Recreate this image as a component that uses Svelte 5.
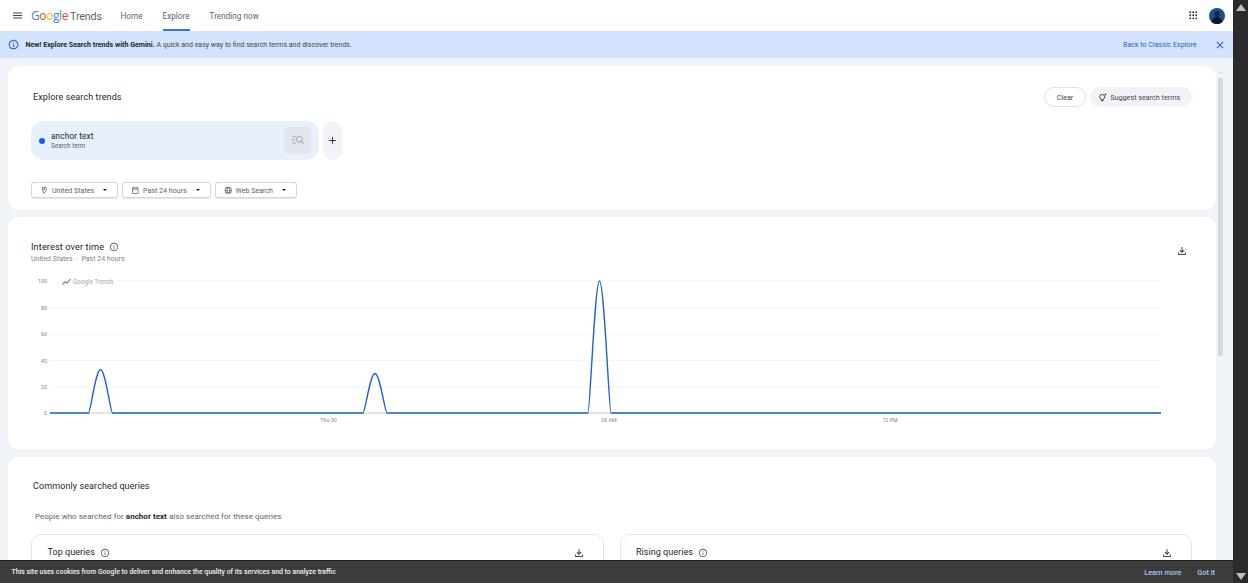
<script>
  const yTicks = [
    { label: '100', y: 281 },
    { label: '80', y: 307.5 },
    { label: '60', y: 334 },
    { label: '40', y: 360.5 },
    { label: '20', y: 387 }
  ];
  const xTicks = [
    { label: 'Thu 30', x: 328.5 },
    { label: '06 AM', x: 609 },
    { label: '12 PM', x: 890 }
  ];
  const base = 413;
  const peaks = [
    { c: 100.5, w: 12, top: 369.5 },
    { c: 375, w: 12, top: 373.5 },
    { c: 599.5, w: 11.5, top: 281 }
  ];
  function peak(p) {
    const s = p.c - p.w, e = p.c + p.w, a = p.w * 0.17, d = p.w * 0.41;
    return `L${s} ${base} C${s + a} ${base} ${p.c - d} ${p.top} ${p.c} ${p.top} C${p.c + d} ${p.top} ${e - a} ${base} ${e} ${base} `;
  }
  const line = `M50 ${base} ` + peaks.map(peak).join('') + `L1161 ${base}`;
</script>

<div class="screen">
  <div class="page">
    <header class="topbar">
      <svg class="menu" viewBox="0 0 24 24" aria-hidden="true"><path d="M3 18h18v-2H3v2zm0-5h18v-2H3v2zm0-7v2h18V6H3z" /></svg>
      <div class="logo">
        <span class="g-blue">G</span><span class="g-red">o</span><span class="g-yellow">o</span><span class="g-blue">g</span><span class="g-green">l</span><span class="g-red">e</span>
        <span class="logo-word">Trends</span>
      </div>
      <nav class="nav">
        <span class="nav-item">Home</span>
        <span class="nav-item active">Explore</span>
        <span class="nav-item">Trending now</span>
      </nav>
      <svg class="apps" viewBox="0 0 12 12" aria-hidden="true">
        {#each [1.7, 6, 10.3] as cy}
          {#each [1.7, 6, 10.3] as cx}
            <circle {cx} {cy} r="1.25" />
          {/each}
        {/each}
      </svg>
      <svg class="avatar" viewBox="0 0 16 16" aria-hidden="true">
        <circle cx="8" cy="8" r="8" fill="#1d4f8c" />
        <ellipse cx="8" cy="6" rx="2.6" ry="3" fill="#16263f" />
        <path d="M2.6 14c.6-3.6 2.8-5 5.4-5s4.8 1.4 5.4 5a8 8 0 0 1-10.8 0z" fill="#0c1626" />
      </svg>
    </header>

    <div class="banner">
      <svg class="banner-info" viewBox="0 0 24 24" aria-hidden="true"><path d="M11 7h2v2h-2zm0 4h2v6h-2zm1-9C6.48 2 2 6.48 2 12s4.48 10 10 10 10-4.48 10-10S17.52 2 12 2zm0 18c-4.41 0-8-3.59-8-8s3.59-8 8-8 8 3.59 8 8-3.59 8-8 8z" /></svg>
      <p class="banner-text"><b>New! Explore Search trends with Gemini.</b> A quick and easy way to find search terms and discover trends.</p>
      <span class="banner-link">Back to Classic Explore</span>
      <svg class="banner-close" viewBox="0 0 24 24" aria-hidden="true"><path d="M19 6.41 17.59 5 12 10.59 6.41 5 5 6.41 10.59 12 5 17.59 6.41 19 12 13.41 17.59 19 19 17.59 13.41 12z" /></svg>
    </div>

    <div class="content">
      <main class="cards">
        <section class="card explore">
          <div class="explore-head">
            <h2 class="title">Explore search trends</h2>
            <button class="clear">Clear</button>
            <button class="suggest">
              <svg viewBox="0 0 24 24" aria-hidden="true"><path d="M10 6a6 6 0 0 0-3.600 10.800c.5.4.8 1 .8 1.700V19h5.600v-.5c0-.7.3-1.300.8-1.700A6 6 0 0 0 10 6zm-2.800 15h5.600" fill="none" stroke="#1f1f1f" stroke-width="2" /><path d="M18 2l.9 2.600 2.600.9-2.600.9L18 9l-.9-2.600-2.600-.9 2.600-.9z" fill="#1f1f1f" /></svg>
              Suggest search terms
            </button>
          </div>
          <div class="terms">
            <div class="term">
              <span class="dot"></span>
              <div class="term-text">
                <span class="term-name">anchor text</span>
                <span class="term-sub">Search term</span>
              </div>
              <span class="term-btn">
                <svg viewBox="0 0 24 24" aria-hidden="true"><path d="M3 6h7M3 11h5M3 16h7" stroke="#a9b0b8" stroke-width="1.800" fill="none" /><circle cx="15" cy="10" r="4.500" stroke="#a9b0b8" stroke-width="1.800" fill="none" /><path d="M18.500 13.500 22 17" stroke="#a9b0b8" stroke-width="1.800" /></svg>
              </span>
            </div>
            <div class="add">
              <svg viewBox="0 0 24 24" aria-hidden="true"><path d="M19 13h-6v6h-2v-6H5v-2h6V5h2v6h6z" /></svg>
            </div>
          </div>
          <div class="filters">
            <button class="filter f1">
              <svg viewBox="0 0 24 24" aria-hidden="true"><path d="M12 2a7 7 0 0 0-7 7c0 5 7 13 7 13s7-8 7-13a7 7 0 0 0-7-7zm0 2a5 5 0 0 1 5 5c0 2.900-3 7.300-5 9.900C10 16.300 7 11.900 7 9a5 5 0 0 1 5-5zm0 2.500a2.500 2.500 0 1 0 0 5 2.500 2.500 0 0 0 0-5z" /></svg>
              <span>United States</span><i class="caret"></i>
            </button>
            <button class="filter f2">
              <svg viewBox="0 0 24 24" aria-hidden="true"><path d="M19 4h-1V2h-2v2H8V2H6v2H5a2 2 0 0 0-2 2v14a2 2 0 0 0 2 2h14a2 2 0 0 0 2-2V6a2 2 0 0 0-2-2zm0 16H5V10h14v10zm0-12H5V6h14v2z" /></svg>
              <span>Past 24 hours</span><i class="caret"></i>
            </button>
            <button class="filter f3">
              <svg viewBox="0 0 24 24" aria-hidden="true"><path d="M12 2a10 10 0 1 0 0 20 10 10 0 0 0 0-20zm7.900 9h-3.400a15 15 0 0 0-1.300-6A8 8 0 0 1 19.900 11zM12 4c1 1.200 2.200 3.800 2.500 7h-5C9.800 7.800 11 5.200 12 4zM8.800 5a15 15 0 0 0-1.300 6H4.100A8 8 0 0 1 8.800 5zM4.100 13h3.400a15 15 0 0 0 1.300 6A8 8 0 0 1 4.100 13zM12 20c-1-1.200-2.200-3.800-2.500-7h5c-.3 3.200-1.500 5.800-2.500 7zm3.200-1a15 15 0 0 0 1.300-6h3.400a8 8 0 0 1-4.700 6z" /></svg>
              <span>Web Search</span><i class="caret"></i>
            </button>
          </div>
        </section>

        <section class="card interest">
          <div class="interest-head">
            <div>
              <div class="interest-title">
                <h2>Interest over time</h2>
                <svg class="info" viewBox="0 0 24 24" aria-hidden="true"><path d="M11 7h2v2h-2zm0 4h2v6h-2zm1-9C6.480 2 2 6.480 2 12s4.480 10 10 10 10-4.480 10-10S17.520 2 12 2zm0 18c-4.410 0-8-3.590-8-8s3.590-8 8-8 8 3.590 8 8-3.590 8-8 8z" /></svg>
              </div>
              <p class="interest-sub">United States &nbsp;·&nbsp; Past 24 hours</p>
            </div>
            <svg class="download" viewBox="0 0 24 24" aria-hidden="true"><path d="M12 16l-5-5 1.400-1.450L11 12.150V4h2v8.150l2.600-2.600L17 11zM6 20a2 2 0 0 1-2-2v-3h2v3h12v-3h2v3a2 2 0 0 1-2 2z" /></svg>
          </div>
          <svg class="chart" viewBox="8 217 1208 232" aria-label="Interest over time chart">
            {#each yTicks as t}
              <line x1="50" x2="1161" y1={t.y} y2={t.y} class="grid" />
              <text x="47" y={t.y + 2} class="axis" text-anchor="end">{t.label}</text>
            {/each}
            <line x1="50" x2="1161" y1={base} y2={base} class="baseline" />
            <text x="47" y={base + 2} class="axis" text-anchor="end">0</text>
            <rect x="50" y="275" width="68" height="12" fill="#fff" />
            <path d="M62.500 284.500l2.800-3 1.700 1.700 3.500-4" fill="none" stroke="#80868b" stroke-width="1.100" />
            <text x="73" y="284" class="watermark">Google Trends</text>
            {#each xTicks as t}
              <text x={t.x} y="421.500" class="axis" text-anchor="middle">{t.label}</text>
            {/each}
            <path d={line} fill="none" stroke="#1f62d0" stroke-width="1.400" />
          </svg>
        </section>

        <section class="card queries">
          <h2 class="title">Commonly searched queries</h2>
          <p class="queries-sub">People who searched for <b>anchor text</b> also searched for these queries</p>
          <div class="query-grid">
            <div class="query-card">
              <span class="q-title">Top queries</span>
              <svg class="info" viewBox="0 0 24 24" aria-hidden="true"><path d="M11 7h2v2h-2zm0 4h2v6h-2zm1-9C6.480 2 2 6.480 2 12s4.480 10 10 10 10-4.480 10-10S17.520 2 12 2zm0 18c-4.410 0-8-3.590-8-8s3.590-8 8-8 8 3.590 8 8-3.590 8-8 8z" /></svg>
              <svg class="download" viewBox="0 0 24 24" aria-hidden="true"><path d="M12 16l-5-5 1.400-1.450L11 12.150V4h2v8.150l2.600-2.600L17 11zM6 20a2 2 0 0 1-2-2v-3h2v3h12v-3h2v3a2 2 0 0 1-2 2z" /></svg>
            </div>
            <div class="query-card">
              <span class="q-title">Rising queries</span>
              <svg class="info" viewBox="0 0 24 24" aria-hidden="true"><path d="M11 7h2v2h-2zm0 4h2v6h-2zm1-9C6.480 2 2 6.480 2 12s4.480 10 10 10 10-4.480 10-10S17.520 2 12 2zm0 18c-4.410 0-8-3.590-8-8s3.590-8 8-8 8 3.590 8 8-3.590 8-8 8z" /></svg>
              <svg class="download" viewBox="0 0 24 24" aria-hidden="true"><path d="M12 16l-5-5 1.400-1.450L11 12.150V4h2v8.150l2.600-2.600L17 11zM6 20a2 2 0 0 1-2-2v-3h2v3h12v-3h2v3a2 2 0 0 1-2 2z" /></svg>
            </div>
          </div>
        </section>
      </main>
      <div class="inner-scroll"><i class="inner-arrow"></i><span class="inner-thumb"></span></div>
    </div>
  </div>

  <div class="outer-scroll">
    <i class="arrow up"></i>
    <i class="arrow down"></i>
  </div>

  <div class="cookie">
    <span class="cookie-text">This site uses cookies from Google to deliver and enhance the quality of its services and to analyze traffic</span>
    <span class="cookie-link">Learn more</span>
    <span class="cookie-link got">Got it</span>
  </div>
</div>

<style>
  :global(body) {
    margin: 0;
    font-family: Roboto, "Liberation Sans", sans-serif;
    color: #1f1f1f;
    overflow: hidden;
  }
  h2, p { margin: 0; font-weight: 400; }
  button { font-family: inherit; cursor: default; }

  .screen {
    position: relative;
    display: flex;
    width: 1248px;
    height: 583px;
    overflow: hidden;
  }
  .page {
    flex: 0 0 1233px;
    display: flex;
    flex-direction: column;
    background: #f0f4f9;
  }

  .topbar {
    flex: 0 0 31px;
    display: flex;
    align-items: center;
    padding-left: 12px;
    background: #fff;
  }
  .menu { width: 11px; height: 11px; fill: #444746; transform: scale(1.1); }
  .logo {
    display: flex;
    align-items: baseline;
    margin-left: 8px;
    font-family: "Open Sans", sans-serif;
    font-size: 12px;
    letter-spacing: -0.4px;
    width: 89.500px;
    white-space: pre;
  }
  .g-blue { color: #4285f4; }
  .g-red { color: #ea4335; }
  .g-yellow { color: #fbbc05; }
  .g-green { color: #34a853; }
  .logo-word {
    color: #5f6368;
    margin-left: 2px;
    font-family: Roboto, sans-serif;
    font-weight: 400;
    font-size: 10.800px;
    letter-spacing: -0.2px;
  }
  .nav { display: flex; align-self: stretch; gap: 20px; }
  .nav-item {
    display: flex;
    align-items: center;
    padding: 2px 0 0;
    font-size: 8.200px;
    color: #5f6368;
    border-bottom: 2px solid transparent;
  }
  .nav-item.active { color: #5f6368; border-bottom-color: #3f72d8; }
  .apps { width: 8.500px; height: 8.500px; margin-left: auto; fill: #1f1f1f; }
  .avatar { width: 16px; height: 16px; margin: 0 8px 0 12px; }

  .banner {
    flex: 0 0 27px;
    display: flex;
    align-items: center;
    padding-left: 8px;
    background: #d3e3fd;
  }
  .banner-info { width: 11px; height: 11px; fill: #2a5fc4; transform: scale(1.050); }
  .banner-text { margin-left: 6.500px; font-size: 7px; color: #444746; white-space: nowrap; }
  .banner-text b { font-weight: 700; font-size: 7.100px; color: #1f1f1f; }
  .banner-link { margin-left: auto; font-size: 7.100px; color: #2a5fc4; }
  .banner-close { width: 12px; height: 12px; margin: 0 7.500px 0 17px; fill: #2a5fc4; }

  .content { flex: 1; display: flex; min-height: 0; padding-top: 8px; }
  .cards {
    flex: 0 0 1208px;
    margin-left: 8px;
    display: flex;
    flex-direction: column;
    min-width: 0;
  }
  .card { background: #fff; border-radius: 11px; flex: none; }
  .title { font-size: 9px; letter-spacing: 0.1px; color: #1f1f1f; }

  .explore { height: 144px; padding: 0 24px 0 23px; box-sizing: border-box; }
  .explore-head { display: flex; align-items: center; height: 22px; margin-top: 20px; }
  .explore-head .title { margin: 0 auto 0 2px; }
  .clear {
    width: 42px;
    height: 20px;
    padding: 0;
    border: 1px solid #dde1e6;
    border-radius: 10px;
    background: #fff;
    font-size: 7.200px;
    color: #444746;
  }
  .suggest {
    display: flex;
    align-items: center;
    justify-content: center;
    gap: 2.500px;
    width: 102px;
    height: 20px;
    margin-left: 4px;
    padding: 0 4px 0 0;
    border: 0;
    border-radius: 10px;
    background: #f0f4f9;
    font-size: 7.200px;
    color: #444746;
  }
  .suggest svg { width: 10px; height: 10px; }

  .terms { display: flex; gap: 4px; margin-top: 13px; }
  .term {
    display: flex;
    align-items: center;
    width: 288px;
    height: 39px;
    box-sizing: border-box;
    padding: 0 8px 0 7px;
    background: #e8f0fe;
    border-radius: 13px;
  }
  .dot { width: 6px; height: 6px; border-radius: 50%; background: #1a5fe6; margin-left: 0.5px; }
  .term-text { display: flex; flex-direction: column; gap: 1px; margin-left: 6.500px; }
  .term-name { font-size: 8.300px; letter-spacing: 0.1px; color: #1f1f1f; }
  .term-sub { font-size: 6.400px; color: #5f6368; }
  .term-btn {
    display: flex;
    align-items: center;
    justify-content: center;
    width: 27px;
    height: 27px;
    margin-left: auto;
    border-radius: 5px;
    background: #e2e7ee;
  }
  .term-btn svg { width: 15px; height: 15px; }
  .add {
    display: flex;
    align-items: center;
    justify-content: center;
    width: 19px;
    height: 39px;
    background: #f0f4f9;
    border-radius: 10px;
  }
  .add svg { width: 11px; height: 11px; fill: #1f1f1f; }

  .filters { display: flex; gap: 4px; margin-top: 22px; }
  .filter {
    display: flex;
    align-items: center;
    height: 16px;
    box-sizing: border-box;
    padding: 0 0 0 8px;
    background: #fff;
    border: 1px solid #d5d8dc;
    border-radius: 3px;
    box-shadow: 0 0.5px 1px rgba(60, 64, 67, 0.15);
    font-size: 7.100px;
    color: #5f6368;
  }
  .filter svg { width: 8.500px; height: 8.500px; fill: #5f6368; }
  .filter span { margin-left: 3.500px; white-space: nowrap; }
  .f1 { width: 87px; }
  .f2 { width: 88.500px; }
  .f3 { width: 82px; }
  .caret {
    margin-left: auto;
    margin-right: 10px;
    width: 0;
    height: 0;
    border-left: 2.500px solid transparent;
    border-right: 2.500px solid transparent;
    border-top: 2.500px solid #1f1f1f;
  }

  .interest { position: relative; height: 232px; margin-top: 7px; }
  .interest-head {
    display: flex;
    justify-content: space-between;
    padding: 24px 28px 0 23px;
    position: relative;
    z-index: 1;
  }
  .interest-title { display: flex; align-items: center; gap: 5px; }
  .interest-title h2 { font-size: 9.200px; letter-spacing: 0.1px; }
  .info { width: 10px; height: 10px; fill: #5f6368; }
  .interest-sub { margin-top: 3px; font-size: 7px; color: #80868b; }
  .download { width: 12px; height: 12px; fill: #444746; margin-top: 4px; }
  .chart { position: absolute; inset: 0; width: 1208px; height: 232px; }
  .grid { stroke: #eef0f2; stroke-width: 0.8; }
  .baseline { stroke: #c8cacc; stroke-width: 1; }
  .axis { font-size: 5.300px; fill: #80868b; font-family: Roboto, sans-serif; }
  .watermark { font-size: 6.300px; fill: #a6a9ad; font-family: Roboto, sans-serif; }

  .queries { height: 140px; margin-top: 8px; padding: 24px 24px 0 23px; box-sizing: border-box; }
  .queries .title { margin-left: 2px; }
  .queries-sub { margin: 21px 0 0 4px; font-size: 7.900px; letter-spacing: 0.08px; color: #5f6368; }
  .queries-sub b { color: #1f1f1f; font-weight: 700; }
  .query-grid { display: grid; grid-template-columns: 1fr 1fr; gap: 16px; margin-top: 13px; }
  .query-card {
    display: flex;
    gap: 5px;
    height: 60px;
    padding: 12px 18px 0 15.500px;
    border: 1px solid #e3e5e8;
    border-radius: 10px;
    box-sizing: border-box;
    align-items: flex-start;
  }
  .q-title { font-size: 9.100px; color: #1f1f1f; }
  .query-card .info { margin-top: 1px; }
  .query-card .download { margin: 0 0 0 auto; }

  .inner-scroll { position: relative; flex: 1; }
  .inner-arrow {
    position: absolute;
    left: 3px;
    top: 5px;
    border-left: 2px solid transparent;
    border-right: 2px solid transparent;
    border-bottom: 2.500px solid #d2d5d8;
  }
  .inner-thumb {
    position: absolute;
    left: 2px;
    top: 12px;
    width: 5px;
    height: 278px;
    background: #d6d9dc;
    border-radius: 1px;
  }

  .outer-scroll {
    position: relative;
    flex: 1;
    background: #2b2b2b;
  }
  .arrow {
    position: absolute;
    left: 3px;
    width: 0;
    height: 0;
    border-left: 5px solid transparent;
    border-right: 5px solid transparent;
  }
  .arrow.up { top: 4px; border-bottom: 7px solid #bdbdbd; }
  .arrow.down { bottom: 3px; border-top: 7px solid #bdbdbd; }

  .cookie {
    position: absolute;
    left: 0;
    right: 15px;
    bottom: 0;
    height: 23px;
    display: flex;
    align-items: center;
    padding: 0 18px 0 11.500px;
    background: #3c3c3c;
    border-top: 1px solid #1c1c1c;
    box-sizing: border-box;
    font-size: 6.900px;
    font-weight: 500;
    color: #f1f1f1;
  }
  .cookie-text { margin-right: auto; }
  .cookie-link { color: #a8c7fa; font-size: 7.300px; font-weight: 500; }
  .got { margin-left: 16px; }
</style>
